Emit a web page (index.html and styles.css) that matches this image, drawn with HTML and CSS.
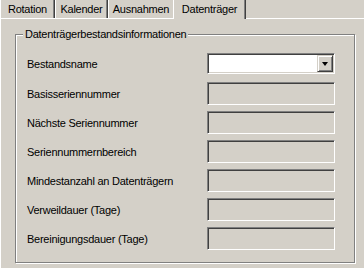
FILE: index.html
```html
<!DOCTYPE html>
<html lang="de">
<head>
  <meta charset="UTF-8">
  <title>Datenträger</title>
  <link rel="stylesheet" href="styles.css">
</head>
<body>

  <div class="tabs">
    <div class="tab tab-rotation">Rotation</div>
    <div class="tab tab-kalender">Kalender</div>
    <div class="tab tab-ausnahmen">Ausnahmen</div>
    <div class="tab tab-active">Datenträger</div>
  </div>

  <div class="page">
    <div class="group">
      <div class="group-title">Datenträgerbestandsinformationen</div>

      <div class="rows">
        <div class="row row-combo">
          <label>Bestandsname</label>
          <div class="combo">
            <div class="combo-btn"><span class="arrow"></span></div>
          </div>
        </div>
        <div class="row">
          <label>Basisseriennummer</label>
          <div class="field"></div>
        </div>
        <div class="row">
          <label>Nächste Seriennummer</label>
          <div class="field"></div>
        </div>
        <div class="row">
          <label>Seriennummernbereich</label>
          <div class="field"></div>
        </div>
        <div class="row">
          <label>Mindestanzahl an Datenträgern</label>
          <div class="field"></div>
        </div>
        <div class="row">
          <label>Verweildauer (Tage)</label>
          <div class="field"></div>
        </div>
        <div class="row">
          <label>Bereinigungsdauer (Tage)</label>
          <div class="field"></div>
        </div>
      </div>
    </div>
  </div>

</body>
</html>
```

FILE: styles.css
```css
body {
  margin: 0;
  background: #d4d0c8;
  font-family: 'Liberation Sans', Arial, sans-serif;
  font-size: 11px;
  letter-spacing: -0.25px;
  color: #000;
  overflow: hidden;
}

/* tab strip */
.tabs {
  display: flex;
  align-items: flex-start;
  height: 18px;
}

.tab {
  box-sizing: border-box;
  height: 18px;
  line-height: 18px;
  text-align: center;
  border-left: 1px solid #fff;
  border-right: 1px solid #404040;
  box-shadow: inset -1px 0 #808080;
}

.tab-rotation { width: 55px; }
.tab-kalender { width: 53px; }
.tab-ausnahmen { width: 65px; border-right: none; box-shadow: none; }

.tab-active {
  position: relative;
  z-index: 1;
  width: 73px;
  height: 19px;
  background: #d4d0c8;
}

/* tab page */
.page {
  box-sizing: border-box;
  height: 250px;
  border-top: 1px solid #fff;
  border-left: 1px solid #fff;
  padding: 15px 0 0 14px;
}

.group {
  box-sizing: border-box;
  width: 340px;
  height: 229px;
  border: 1px solid #808080;
  box-shadow: inset 1px 1px #fff, 1px 1px #fff;
}

.group-title {
  width: max-content;
  margin: -7px 0 0 7px;
  padding: 0 2px;
  line-height: 13px;
  background: #d4d0c8;
}

.rows {
  margin-top: 12px;
  padding-left: 11px;
  display: flex;
  flex-direction: column;
  gap: 6px;
}

.row {
  display: flex;
  align-items: center;
  height: 23px;
}

.row-combo {
  height: 21px;
  margin-bottom: 2px;
}

.row label {
  width: 180px;
}

/* sunken controls */
.field,
.combo {
  box-sizing: border-box;
  width: 128px;
  height: 23px;
  border: 1px solid;
  border-color: #808080 #fff #fff #808080;
  box-shadow: inset 1px 1px #404040, inset -1px -1px #d4d0c8;
}

.combo {
  height: 21px;
  background: #fff;
  display: flex;
  justify-content: flex-end;
  padding: 1px;
}

.combo-btn {
  box-sizing: border-box;
  width: 16px;
  height: 17px;
  background: #d4d0c8;
  border: 1px solid;
  border-color: #d4d0c8 #404040 #404040 #d4d0c8;
  box-shadow: inset 1px 1px #fff, inset -1px -1px #808080;
  display: flex;
  align-items: center;
  justify-content: center;
}

.arrow {
  width: 0;
  height: 0;
  border-left: 3.5px solid transparent;
  border-right: 3.5px solid transparent;
  border-top: 4px solid #000;
}
```
